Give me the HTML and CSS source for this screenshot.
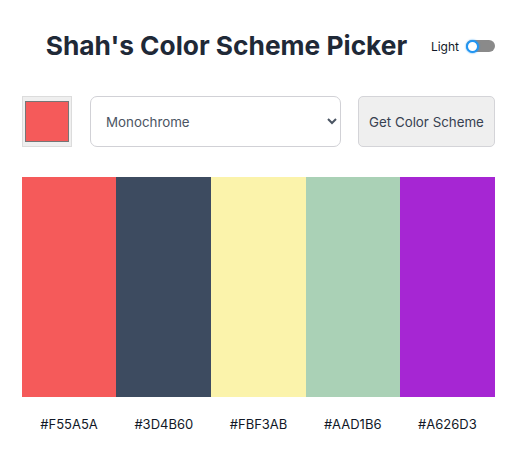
FILE: index.html
```html
<!DOCTYPE html>
<html lang="en">
<head>
<meta charset="utf-8">
<title>Shah's Color Scheme Picker</title>
<link rel="stylesheet" href="styles.css">
</head>
<body>
<main class="app">
  <header class="header">
    <h1 class="title">Shah's Color Scheme Picker</h1>
    <div class="mode">
      <span class="mode-label">Light</span>
      <span class="toggle"><span class="knob"></span></span>
    </div>
  </header>
  <section class="controls">
    <div class="color-input"><span class="swatch"></span></div>
    <select class="scheme-select">
      <option>Monochrome</option>
      <option>Monochrome Dark</option>
      <option>Monochrome Light</option>
      <option>Analogic</option>
      <option>Complement</option>
    </select>
    <button class="get-btn">Get Color Scheme</button>
  </section>
  <section class="palette">
    <div class="col"><div class="color" style="background:#F55A5A"></div><p class="hex">#F55A5A</p></div>
    <div class="col"><div class="color" style="background:#3D4B60"></div><p class="hex">#3D4B60</p></div>
    <div class="col"><div class="color" style="background:#FBF3AB"></div><p class="hex">#FBF3AB</p></div>
    <div class="col"><div class="color" style="background:#AAD1B6"></div><p class="hex">#AAD1B6</p></div>
    <div class="col"><div class="color" style="background:#A626D3"></div><p class="hex">#A626D3</p></div>
  </section>
</main>
</body>
</html>
```
FILE: styles.css
```css
* { box-sizing: border-box; }
body {
  margin: 0;
  background: #ffffff;
  font-family: Inter, "Liberation Sans", sans-serif;
  color: #1f2937;
}
.app {
  width: 473px;
  margin-left: 22px;
  padding-top: 28px;
}
.header {
  display: flex;
  align-items: center;
  height: 36px;
}
.title {
  flex: 1;
  margin: 0;
  text-align: center;
  font-size: 26.3px;
  font-weight: 700;
  color: #1f2937;
  line-height: 36px;
}
.mode {
  display: flex;
  align-items: center;
  gap: 7px;
}
.mode-label {
  font-size: 12px;
  color: #111827;
}
.toggle {
  display: flex;
  align-items: center;
  width: 29px;
  height: 12px;
  border-radius: 6px;
  background: #8a8a8a;
}
.knob {
  width: 13px;
  height: 13px;
  border-radius: 50%;
  background: #ffffff;
  border: 2.5px solid #2196f3;
  box-shadow: 0 0 2px #2196f3;
}
.controls {
  display: flex;
  align-items: center;
  margin-top: 32px;
  height: 51px;
}
.color-input {
  width: 50px;
  height: 51px;
  border: 1px solid #dcdcdc;
  background: #efefef;
  padding: 4px 2px;
  display: flex;
}
.swatch {
  flex: 1;
  background: #f55a5a;
  border: 1px solid #767676;
}
.scheme-select {
  margin-left: 18px;
  width: 251px;
  height: 51px;
  border: 1px solid #d1d1d6;
  border-radius: 7px;
  background: #ffffff;
  padding: 0 10px 0 11px;
  font-family: Inter, "Liberation Sans", sans-serif;
  font-size: 13.33px;
  color: #4b5563;
}
.get-btn {
  margin-left: 17px;
  width: 137px;
  height: 51px;
  border: 1px solid #d4d4d8;
  border-radius: 5px;
  background: #efefef;
  font-family: Inter, "Liberation Sans", sans-serif;
  font-size: 13.33px;
  color: #374151;
  padding: 0;
}
.palette {
  display: flex;
  margin-top: 30px;
}
.col {
  flex: 1 1 auto;
  display: flex;
  flex-direction: column;
}
.color {
  height: 220px;
}
.hex {
  margin: 0;
  padding-top: 19px;
  text-align: center;
  font-size: 13px;
  line-height: 16px;
  color: #111827;
}
```
